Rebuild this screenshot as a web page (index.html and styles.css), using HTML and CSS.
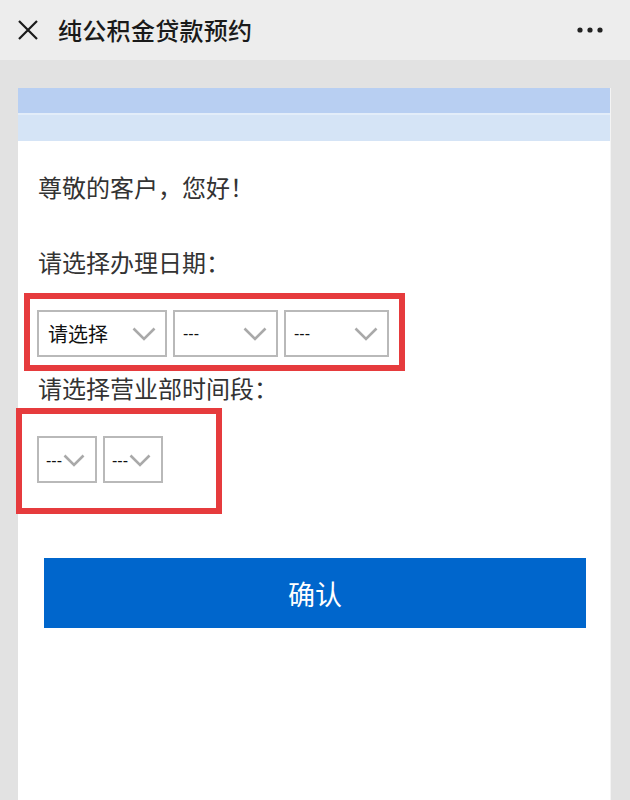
FILE: index.html
```html
<!DOCTYPE html>
<html lang="zh-CN">
<head>
<meta charset="utf-8">
<title>纯公积金贷款预约</title>
<link rel="stylesheet" href="styles.css">
</head>
<body>
<header class="nav">
  <svg class="close" width="22" height="22" viewBox="0 0 22 22"><path d="M2 2 L20 20 M20 2 L2 20" stroke="#1a1a1a" stroke-width="2.2" fill="none"/></svg>
  <h1 class="title">纯公积金贷款预约</h1>
  <svg class="more" width="26" height="6" viewBox="0 0 26 6"><circle cx="3" cy="3" r="2.6" fill="#222"/><circle cx="13" cy="3" r="2.6" fill="#222"/><circle cx="23" cy="3" r="2.6" fill="#222"/></svg>
</header>
<main class="card">
  <div class="band-dark"></div>
  <div class="band-light"></div>
  <div class="content">
    <p class="greet">尊敬的客户，您好！</p>
    <p class="label label-date">请选择办理日期：</p>
    <div class="mark mark-date">
      <div class="sel sel-wide">
        <span class="txt cjk">请选择</span>
        <svg class="chev" width="24" height="14" viewBox="0 0 24 14"><path d="M1.5 1.5 L12 12 L22.5 1.5" stroke="#a9a9a9" stroke-width="2.6" fill="none"/></svg>
      </div>
      <div class="sel sel-mid">
        <span class="txt dash">---</span>
        <svg class="chev" width="24" height="14" viewBox="0 0 24 14"><path d="M1.5 1.5 L12 12 L22.5 1.5" stroke="#a9a9a9" stroke-width="2.6" fill="none"/></svg>
      </div>
      <div class="sel sel-mid">
        <span class="txt dash">---</span>
        <svg class="chev" width="24" height="14" viewBox="0 0 24 14"><path d="M1.5 1.5 L12 12 L22.5 1.5" stroke="#a9a9a9" stroke-width="2.6" fill="none"/></svg>
      </div>
    </div>
    <p class="label label-time">请选择营业部时间段：</p>
    <div class="mark mark-time">
      <div class="sel sel-small">
        <span class="txt dash">---</span>
        <svg class="chev" width="22" height="13" viewBox="0 0 22 13"><path d="M1.5 1.5 L11 11 L20.5 1.5" stroke="#a9a9a9" stroke-width="2.6" fill="none"/></svg>
      </div>
      <div class="sel sel-small">
        <span class="txt dash">---</span>
        <svg class="chev" width="22" height="13" viewBox="0 0 22 13"><path d="M1.5 1.5 L11 11 L20.5 1.5" stroke="#a9a9a9" stroke-width="2.6" fill="none"/></svg>
      </div>
    </div>
  </div>
  <button class="confirm" type="button">确认</button>
</main>
</body>
</html>
```
FILE: styles.css
```css
* { box-sizing: border-box; }
html, body { margin: 0; padding: 0; }
body {
  background: #e2e2e2;
  font-family: "Noto Sans CJK SC", "Noto Sans", sans-serif;
  color: #333;
  width: 630px;
  height: 800px;
  overflow: hidden;
}
.nav {
  height: 60px;
  background: #ededed;
  display: flex;
  align-items: center;
  padding: 0 27px 0 17px;
}
.close { flex: none; }
.title {
  margin: 0 0 0 19px;
  font-size: 24px;
  font-weight: 500;
  color: #1a1a1a;
  flex: 1;
  letter-spacing: 0.3px;
  line-height: 1;
}
.more { flex: none; }
.card {
  margin: 28px 19px 0 18px;
  background: #fff;
  height: 712px;
  border-right: 1px solid #f4f4f4;
}
.band-dark { height: 25px; background: #b8cff2; }
.band-light { height: 28px; background: #d5e4f6; border-top: 2px solid #e3edf9; }
.content { padding-top: 31px; }
.greet, .label {
  margin: 0 0 0 20px;
  font-size: 24px;
  line-height: 30px;
  font-weight: 400;
  color: #333;
}
.label-date { margin-top: 45px; }
.mark {
  border: 6px solid #e63b3d;
  display: flex;
  gap: 6px;
}
.mark-date {
  width: 381px;
  margin: 16px 0 0 6px;
  padding: 11px 0 8px 7px;
}
.label-time { margin-top: 2px; }
.mark-time {
  width: 206px;
  margin: 5px 0 0 -2px;
  padding: 22px 0 25px 15px;
}
.sel {
  height: 47px;
  flex: none;
  border: 2px solid #b9b9b9;
  display: flex;
  align-items: center;
  justify-content: space-between;
  padding: 0 9px 0 8px;
}
.sel-wide { width: 130px; padding-left: 9px; }
.sel-mid { width: 105px; }
.sel-small { width: 60px; padding: 2px 8px 0 7px; justify-content: flex-start; }
.sel-small .chev { margin-left: 1px; }
.txt { color: #111; }
.cjk { font-size: 20px; }
.dash { font-family: "Liberation Sans", Arial, sans-serif; font-size: 16px; }
.chev { flex: none; }
.confirm {
  display: block;
  margin: 44px 24px 0 26px;
  width: calc(100% - 50px);
  height: 70px;
  border: 0;
  background: #0066cc;
  color: #fff;
  font-family: "Noto Sans CJK SC", sans-serif;
  font-size: 27px;
  padding: 0;
}
```
